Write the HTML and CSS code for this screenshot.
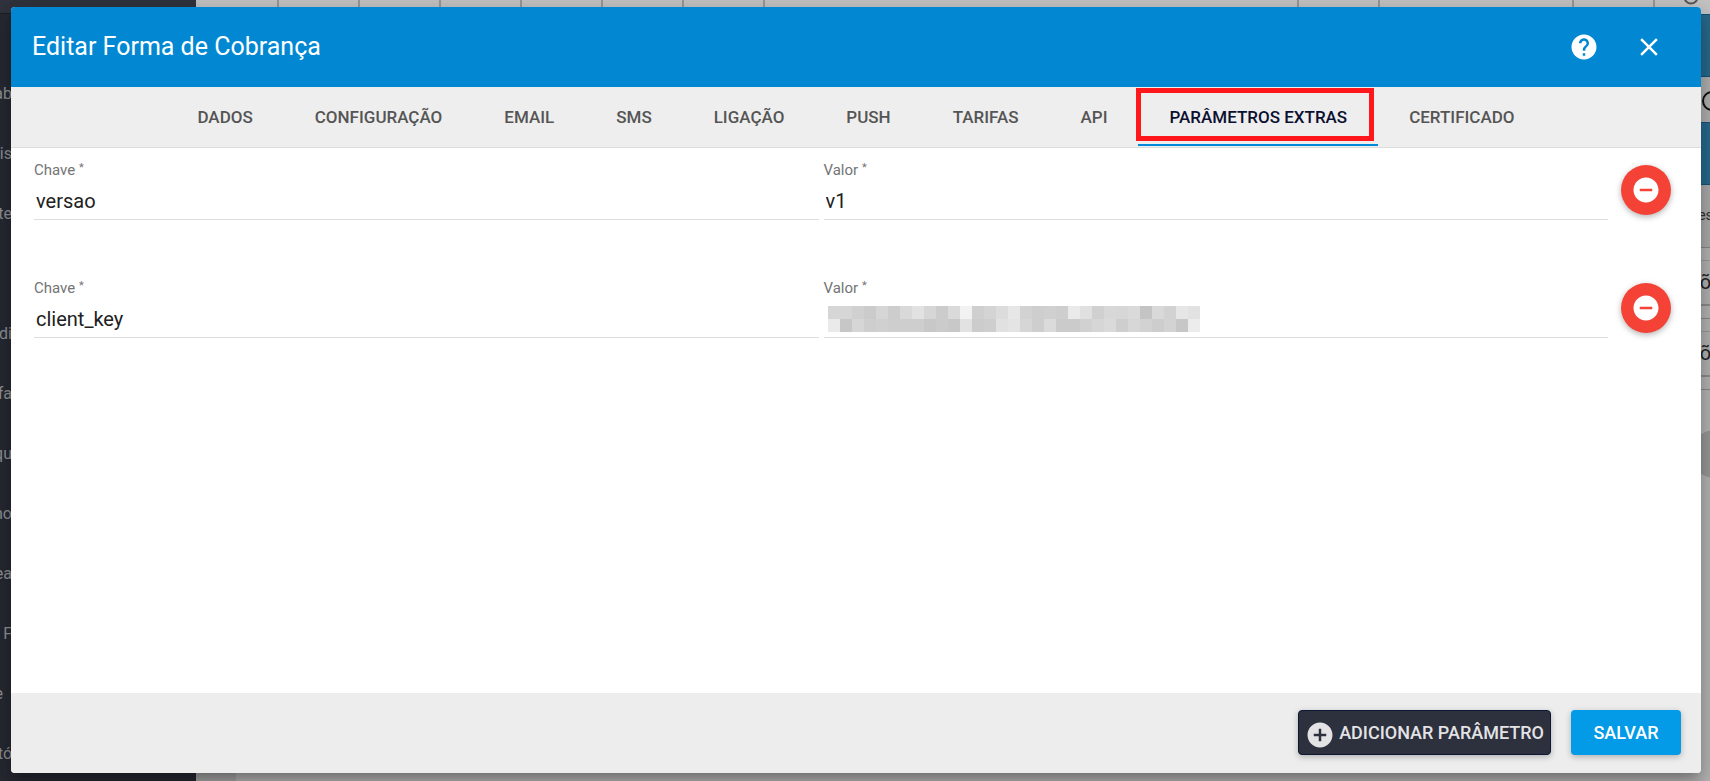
FILE: index.html
```html
<!DOCTYPE html>
<html lang="pt-BR">
<head>
<meta charset="utf-8">
<title>Editar Forma de Cobrança</title>
<link rel="stylesheet" href="styles.css">
</head>
<body>
<div class="backdrop" aria-hidden="true">
  <div class="side">
    <div class="side-top"></div>
    <ul class="side-menu">
      <li>ab</li><li>is</li><li>te</li><li></li><li>di</li><li>fa</li><li>qu</li><li>no</li><li>ea</li><li>F</li><li class="short">e</li><li>tó</li>
    </ul>
  </div>
  <div class="page">
    <div class="sheet">
      <i class="first"></i><i></i><i></i><i></i><i></i><i></i><i></i><i class="wide"></i><i></i><i class="mid"></i><i></i>
      <svg class="ring" viewBox="0 0 16 16"><circle cx="8" cy="8" r="6.5" fill="none" stroke="#555" stroke-width="2"/></svg>
    </div>
    <div class="edge">
      <div class="edge-blue"></div>
      <div class="edge-search"><svg viewBox="0 0 24 24"><circle cx="11" cy="12" r="9" fill="none" stroke="#111" stroke-width="2"/></svg></div>
      <div class="edge-blue"></div>
      <div class="edge-head">es</div>
      <div class="edge-card">õ</div>
      <div class="edge-line"></div>
      <div class="edge-card">õ</div>
      <div class="edge-line"></div>
      <div class="edge-round"></div>
    </div>
  </div>
</div>

<section class="dialog" role="dialog" aria-labelledby="title">
  <header class="head">
    <h1 id="title">Editar Forma de Cobrança</h1>
    <button class="icon-btn" aria-label="Ajuda"><svg viewBox="0 0 24 24"><path fill="currentColor" d="M12 2C6.480 2 2 6.480 2 12s4.480 10 10 10 10-4.480 10-10S17.520 2 12 2zm1 17h-2v-2h2v2zm2.070-7.750l-.9.920C13.450 12.900 13 13.500 13 15h-2v-.5c0-1.100.45-2.100 1.170-2.830l1.240-1.260c.37-.36.59-.86.59-1.410 0-1.100-.9-2-2-2s-2 .9-2 2H8c0-2.210 1.790-4 4-4s4 1.790 4 4c0 .88-.36 1.680-.93 2.250z"/></svg></button>
    <button class="icon-btn" aria-label="Fechar"><svg viewBox="0 0 24 24"><path fill="currentColor" d="M19 6.410L17.590 5 12 10.590 6.410 5 5 6.410 10.590 12 5 17.590 6.410 19 12 13.410 17.590 19 19 17.590 13.410 12z"/></svg></button>
  </header>
  <nav class="tabs" role="tablist">
    <button role="tab">DADOS</button>
    <button role="tab">CONFIGURAÇÃO</button>
    <button role="tab">EMAIL</button>
    <button role="tab">SMS</button>
    <button role="tab">LIGAÇÃO</button>
    <button role="tab">PUSH</button>
    <button role="tab">TARIFAS</button>
    <button role="tab">API</button>
    <button role="tab" class="active" aria-selected="true">PARÂMETROS EXTRAS</button>
    <button role="tab">CERTIFICADO</button>
  </nav>
  <main class="content">
    <div class="row">
      <div class="field"><label for="k1">Chave <sup>*</sup></label><input id="k1" type="text" value="versao"></div>
      <div class="field"><label for="v1">Valor <sup>*</sup></label><input id="v1" type="text" value="v1"></div>
      <button class="fab" aria-label="Remover"><svg viewBox="0 0 24 24"><path fill="currentColor" d="M12 2C6.480 2 2 6.480 2 12s4.480 10 10 10 10-4.480 10-10S17.520 2 12 2zm5 11H7v-2h10v2z"/></svg></button>
    </div>
    <div class="row">
      <div class="field"><label for="k2">Chave <sup>*</sup></label><input id="k2" type="text" value="client_key"></div>
      <div class="field"><label for="v2">Valor <sup>*</sup></label>
        <div class="masked"><input id="v2" type="text" value=""><svg class="mosaic" id="mosaic" viewBox="0 0 372 26" shape-rendering="crispEdges"></svg></div>
      </div>
      <button class="fab" aria-label="Remover"><svg viewBox="0 0 24 24"><path fill="currentColor" d="M12 2C6.480 2 2 6.480 2 12s4.480 10 10 10 10-4.480 10-10S17.520 2 12 2zm5 11H7v-2h10v2z"/></svg></button>
    </div>
  </main>
  <footer class="foot">
    <button class="btn dark"><svg viewBox="0 0 24 24"><path fill="currentColor" d="M12 2C6.480 2 2 6.480 2 12s4.480 10 10 10 10-4.480 10-10S17.520 2 12 2zm5 11h-4v4h-2v-4H7v-2h4V7h2v4h4v2z"/></svg><span>ADICIONAR PARÂMETRO</span></button>
    <button class="btn blue">SALVAR</button>
  </footer>
</section>
<script src="mosaic.js"></script>
</body>
</html>
```
FILE: styles.css
```css
* { box-sizing: border-box; }
body {
  margin: 0;
  height: 100vh;
  overflow: hidden;
  padding: 7px 9px 8px 11px;
  display: flex;
  font-family: Roboto, "Liberation Sans", sans-serif;
  background: #b4b4b4;
}
button { font: inherit; border: 0; background: none; padding: 0; cursor: pointer; }

/* page behind the dialog */
.backdrop { position: absolute; inset: 0; display: flex; overflow: hidden; }
.side { width: 196px; background: #262932; }
.side-top { height: 14px; background: #30333d; border-bottom: 1px solid #1c1e25; }
.side-menu { margin: 0; padding: 50px 0 0; list-style: none; width: 12px; }
.side-menu li {
  height: 60px;
  line-height: 60px;
  display: flex;
  justify-content: flex-end;
  font-size: 16px;
  color: #8f9196;
}
.side-menu .short { padding-right: 9px; }
.page { flex: 1; display: flex; flex-direction: column; background: linear-gradient(90deg, #a4a4a4 0 40px, #b4b4b4 40px); }
.sheet { height: 14px; display: flex; background: #c3c3c3; padding-right: 55px; position: relative; }
.sheet i { width: 81px; border-right: 2px solid #989898; }
.sheet .first { width: 83px; }
.sheet .wide { flex: 1; }
.sheet .mid { width: 194px; }
.ring { position: absolute; right: 11px; top: -11px; width: 16px; height: 16px; }
.edge { width: 9px; align-self: flex-end; display: flex; flex-direction: column; flex: 1; overflow: hidden; }
.edge-blue { height: 63px; background: #28698c; border-top: 1px solid #15527a; border-bottom: 1px solid #15527a; }
.edge-search { height: 45px; background: #b0b0b0; padding-top: 12px; }
.edge-search svg { width: 24px; height: 24px; display: block; }
.edge-head { height: 63px; line-height: 60px; font-size: 15px; color: #333; display: flex; justify-content: center; background: #aaa; border-bottom: 1px solid #888; }
.edge-card { height: 46px; margin-top: 12px; line-height: 42px; font-size: 20px; color: #222; display: flex; justify-content: center; background: #b2b2b2; border-top: 1px solid #999; border-bottom: 2px solid #8c8c8c; }
.edge-line { margin-top: 12px; border-top: 1px solid #888; }
.edge-round { width: 48px; height: 48px; margin: 40px 0 0 -10px; border-radius: 50%; background: #989898; }

/* dialog */
.dialog {
  position: relative;
  flex: 1;
  min-width: 0;
  display: flex;
  flex-direction: column;
  background: #fff;
  border-radius: 4px;
  overflow: hidden;
  box-shadow: 0 7px 9px -4px rgba(0,0,0,.2), 0 14px 21px 2px rgba(0,0,0,.14), 0 5px 26px 4px rgba(0,0,0,.12);
}
.head {
  height: 80px;
  display: flex;
  align-items: center;
  gap: 35px;
  padding: 0 37px 0 21px;
  background: #0288d3;
  color: #fff;
}
.head h1 { flex: 1; margin: 0; font-size: 25px; font-weight: 400; line-height: 30px; }
.icon-btn { color: #fff; width: 30px; height: 30px; }
.icon-btn svg { display: block; width: 30px; height: 30px; }
.tabs {
  height: 61px;
  display: flex;
  justify-content: center;
  background: #eee;
  border-bottom: 1px solid #dcdcdc;
}
.tabs button {
  height: 59px;
  padding: 2px 31px 0;
  font-size: 17px;
  font-weight: 500;
  color: #555;
  border-bottom: 2px solid transparent;
}
.tabs .active { position: relative; color: #0b1030; border-bottom-color: #0288d8; }
.tabs .active::after {
  content: "";
  box-sizing: border-box;
  position: absolute;
  left: -2px;
  right: 4px;
  top: 1px;
  height: 53px;
  border: 5px solid #ff171b;
}
.content { flex: 1; padding: 12px 30px 0 23px; }
.row { display: flex; height: 118px; gap: 5px; }
.field { flex: 1; min-width: 0; display: flex; flex-direction: column; }
.field label { font-size: 15px; line-height: 20px; color: #747474; }
.field sup { font-size: 11px; line-height: 0; vertical-align: 4px; }
.field input {
  width: 100%;
  height: 40px;
  padding: 3px 2px 0;
  border: 0;
  border-bottom: 1px solid #dedede;
  font: 20px/26px Roboto, sans-serif;
  color: #212121;
  background: none;
  outline: none;
}
.masked { position: relative; }
.mosaic { position: absolute; left: 4px; top: 8px; width: 372px; height: 26px; }
.fab {
  width: 50px;
  height: 50px;
  margin: 5px 0 0 8px;
  border-radius: 50%;
  background: #f44336;
  color: #fff;
  display: grid;
  place-items: center;
  box-shadow: 0 2px 6px rgba(0,0,0,.3);
}
.fab svg { width: 30px; height: 30px; }
.foot {
  height: 80px;
  display: flex;
  align-items: center;
  justify-content: flex-end;
  gap: 20px;
  padding: 0 20px 2px;
  background: #ededed;
}
.btn { height: 45px; border-radius: 4px; font-size: 18px; font-weight: 500; box-shadow: 0 2px 6px rgba(0,0,0,.26); }
.dark { display: flex; align-items: center; gap: 4px; padding: 0 6px; background: #2d303d; color: #e3e3e6; border: 1px solid #0d1736; }
.dark svg { width: 30px; height: 30px; margin-top: 6px; }
.blue { width: 110px; background: #039be8; color: #fff; }
```
FILE: mosaic.js
```javascript
// Grey levels of the blocks that hide the key, one list per line.
const rows = [
  [214,214,208,203,214,205,217,226,214,204,218,242,207,212,220,231,210,206,208,206,234,224,208,216,215,218,196,217,210,230,226],
  [234,199,214,206,208,206,206,206,200,203,200,226,204,206,225,228,214,206,219,203,203,209,214,218,206,215,210,205,211,199,236]
];
document.getElementById("mosaic").innerHTML = rows.map((r, y) =>
  r.map((g, x) => `<rect x="${x * 12}" y="${y * 13}" width="12" height="13" fill="rgb(${g},${g},${g})"/>`).join("")
).join("");
```
